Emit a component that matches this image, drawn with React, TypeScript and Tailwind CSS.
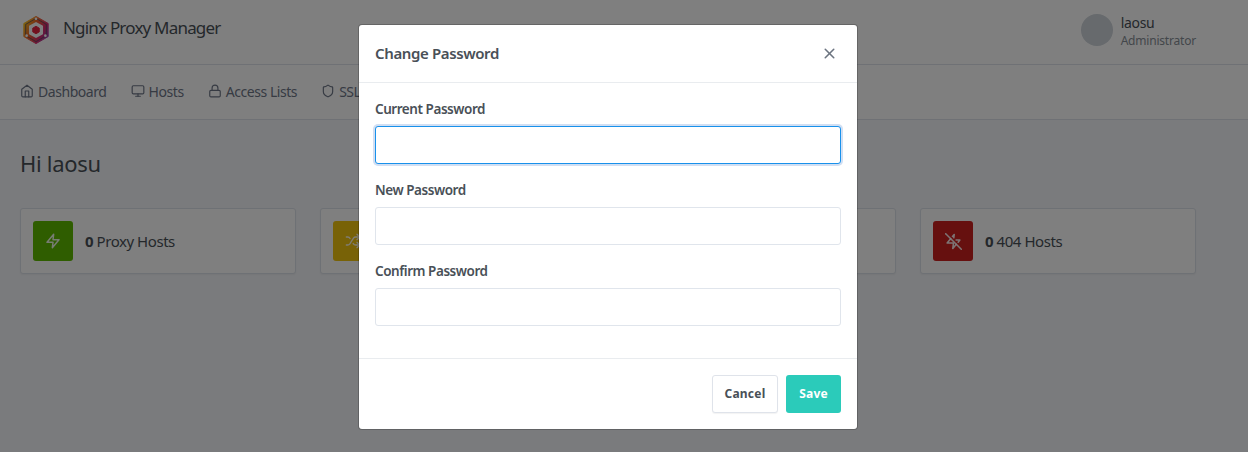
import React from "react";
import { Monitor, Lock, Shield, Shuffle, X, Radio } from "lucide-react";

function HomeIcon({ className }: { className?: string }) {
  return (
    <svg viewBox="0 0 24 24" fill="none" stroke="currentColor" strokeWidth="2" strokeLinecap="round" strokeLinejoin="round" className={className}>
      <path d="M3 9l9-7 9 7v11a2 2 0 0 1-2 2H5a2 2 0 0 1-2-2z" />
      <polyline points="9 22 9 12 15 12 15 22" />
    </svg>
  );
}

function ZapIcon({ className }: { className?: string }) {
  return (
    <svg viewBox="0 0 24 24" fill="none" stroke="currentColor" strokeWidth="2.2" strokeLinecap="round" strokeLinejoin="round" className={className}>
      <polygon points="13 2 3 14 12 14 11 22 21 10 12 10 13 2" />
    </svg>
  );
}

function ZapOffIcon({ className }: { className?: string }) {
  return (
    <svg viewBox="0 0 24 24" fill="none" stroke="currentColor" strokeWidth="2.2" strokeLinecap="round" strokeLinejoin="round" className={className}>
      <polyline points="12.41 6.75 13 2 10.57 4.92" />
      <polyline points="18.57 12.91 21 10 15.66 10" />
      <polyline points="8 8 3 14 12 14 11 22 16 16" />
      <line x1="1" y1="1" x2="23" y2="23" />
    </svg>
  );
}

function Logo() {
  return (
    <svg viewBox="0 0 32 32" className="w-[30px] h-[30px]">
      <defs>
        <linearGradient id="npm" x1="0" y1="0.25" x2="1" y2="0.85">
          <stop offset="0" stopColor="#f8c51c" />
          <stop offset="0.35" stopColor="#f0642a" />
          <stop offset="0.7" stopColor="#d92a6e" />
          <stop offset="1" stopColor="#8a3fb0" />
        </linearGradient>
      </defs>
      <polygon points="16,1.5 29,9 29,23 16,30.5 3,23 3,9" fill="url(#npm)" stroke="url(#npm)" strokeWidth="1" strokeLinejoin="round" />
      <polygon points="16,3.6 27,10 27,22 16,28.4 5,22 5,10" fill="none" stroke="#4a4f5c" strokeWidth="0.8" />
      <polygon points="16,8.5 22.5,12.2 22.5,19.8 16,23.5 9.5,19.8 9.5,12.2" fill="#fff" stroke="#fff" strokeWidth="2" strokeLinejoin="round" />
      <polygon points="16,12 19.5,14 19.5,18 16,20 12.5,18 12.5,14" fill="#e5233f" stroke="#e5233f" strokeWidth="1" strokeLinejoin="round" />
      <circle cx="16" cy="4" r="1.4" fill="#fff" />
      <circle cx="6" cy="22" r="1.4" fill="#fff" />
      <circle cx="26" cy="22" r="1.4" fill="#fff" />
    </svg>
  );
}

function NavItem({ icon, label }: { icon: React.ReactNode; label: string }) {
  return (
    <div className="flex items-center gap-[4px] text-[14px] tracking-[-0.44px] text-[#6e7687]">
      {icon}
      <span>{label}</span>
    </div>
  );
}

function Stat({ bg, icon, label }: { bg: string; icon: React.ReactNode; label: string }) {
  return (
    <div className="h-[66px] bg-white border border-[#dde2ea] rounded-[3px] shadow-[0_1px_2px_rgba(0,0,0,0.05)] flex items-center px-[12px]">
      <div className={`w-[40px] h-[40px] rounded-[3px] flex items-center justify-center text-white/90 ${bg}`}>{icon}</div>
      <div className="ml-[12px] text-[15px] tracking-[-0.45px] text-[#495057]">
        <b className="font-bold">0</b> {label}
      </div>
    </div>
  );
}

function Field({ label, focus }: { label: string; focus?: boolean }) {
  return (
    <div className="mb-[16px]">
      <label className="block h-[27px] text-[13.5px] leading-[21px] font-semibold tracking-[-0.45px] text-[#495057]">{label}</label>
      <div
        className={
          focus
            ? "h-[38px] rounded-[3px] bg-white border border-[#1991eb] shadow-[0_0_0_2px_rgba(70,127,207,0.25)]"
            : "h-[38px] rounded-[3px] bg-white border border-[#e0e5ec]"
        }
      />
    </div>
  );
}

export default function App() {
  return (
    <div className="relative min-h-screen bg-[#f5f7fb] font-['Noto_Sans',sans-serif] overflow-hidden">
      <header className="h-[65px] bg-white border-b border-[#dfe3ea] flex items-center justify-between pl-[21px] pr-[52px] pb-[5px]">
        <div className="flex items-center gap-[12px] text-[17px] tracking-[-0.8px] text-[#495057]">
          <Logo />
          <span className="-mt-[3px]">Nginx Proxy Manager</span>
        </div>
        <div className="flex items-center gap-[8px] mt-[1px]">
          <div className="w-[32px] h-[32px] rounded-full bg-[#ced4da]" />
          <div className="mt-[2px]">
            <div className="text-[14px] leading-[18px] tracking-[-0.3px] text-[#495057]">laosu</div>
            <div className="text-[12px] leading-[17px] tracking-[-0.2px] text-[#868e96]">Administrator</div>
          </div>
        </div>
      </header>

      <nav className="h-[55px] bg-white border-b border-[#dfe3ea] flex items-center pl-[20px] pb-[2px] gap-[24px]">
        <NavItem icon={<HomeIcon className="w-[14px] h-[14px]" />} label="Dashboard" />
        <NavItem icon={<Monitor className="w-[14px] h-[14px]" />} label="Hosts" />
        <NavItem icon={<Lock className="w-[14px] h-[14px]" />} label="Access Lists" />
        <NavItem icon={<Shield className="w-[14px] h-[14px]" />} label="SSL Certificates" />
      </nav>

      <main className="pl-[20px] w-[1216px] pr-[20px]">
        <h1 className="mt-[28px] h-[31px] text-[22px] leading-[31px] tracking-[-0.3px] text-[#495057]">Hi laosu</h1>
        <div className="mt-[29px] grid grid-cols-4 gap-[24px]">
          <Stat bg="bg-[#5eba00]" icon={<ZapIcon className="w-[16px] h-[16px]" />} label="Proxy Hosts" />
          <Stat bg="bg-[#f1c40f]" icon={<Shuffle className="w-[16px] h-[16px]" />} label="Redirection Hosts" />
          <Stat bg="bg-[#467fcf]" icon={<Radio className="w-[16px] h-[16px]" />} label="Streams" />
          <Stat bg="bg-[#cd201f]" icon={<ZapOffIcon className="w-[17px] h-[17px]" />} label="404 Hosts" />
        </div>
      </main>

      <div className="absolute inset-0 bg-black/50 flex justify-center items-start pr-[32px] pt-[25px]">
        <div className="w-[498px] bg-white rounded-[3px] shadow-[0_0_0_1px_rgba(0,0,0,0.2)]">
          <div className="h-[58px] border-b border-[#e9ecef] flex items-center justify-between px-[16px]">
            <h2 className="text-[15px] font-semibold tracking-[-0.38px] text-[#495057]">Change Password</h2>
            <X className="w-[17px] h-[17px] text-[#6c7480] mr-[3px] -mt-[1px]" strokeWidth={2.2} />
          </div>
          <div className="h-[275px] px-[16px] pt-[16px]">
            <Field label="Current Password" focus />
            <Field label="New Password" />
            <Field label="Confirm Password" />
          </div>
          <div className="h-[71px] border-t border-[#e9ecef] flex items-start justify-end gap-[8px] pt-[16px] px-[16px]">
            <button className="w-[66px] h-[38px] rounded-[3px] bg-white border border-[#dfe3ea] text-[12px] font-bold tracking-[0.2px] text-[#495057] shadow-[0_1px_1px_rgba(0,0,0,0.05)]">Cancel</button>
            <button className="w-[55px] h-[38px] rounded-[3px] bg-[#2bcbba] text-[12px] font-bold tracking-[0.2px] text-white">Save</button>
          </div>
        </div>
      </div>
    </div>
  );
}
